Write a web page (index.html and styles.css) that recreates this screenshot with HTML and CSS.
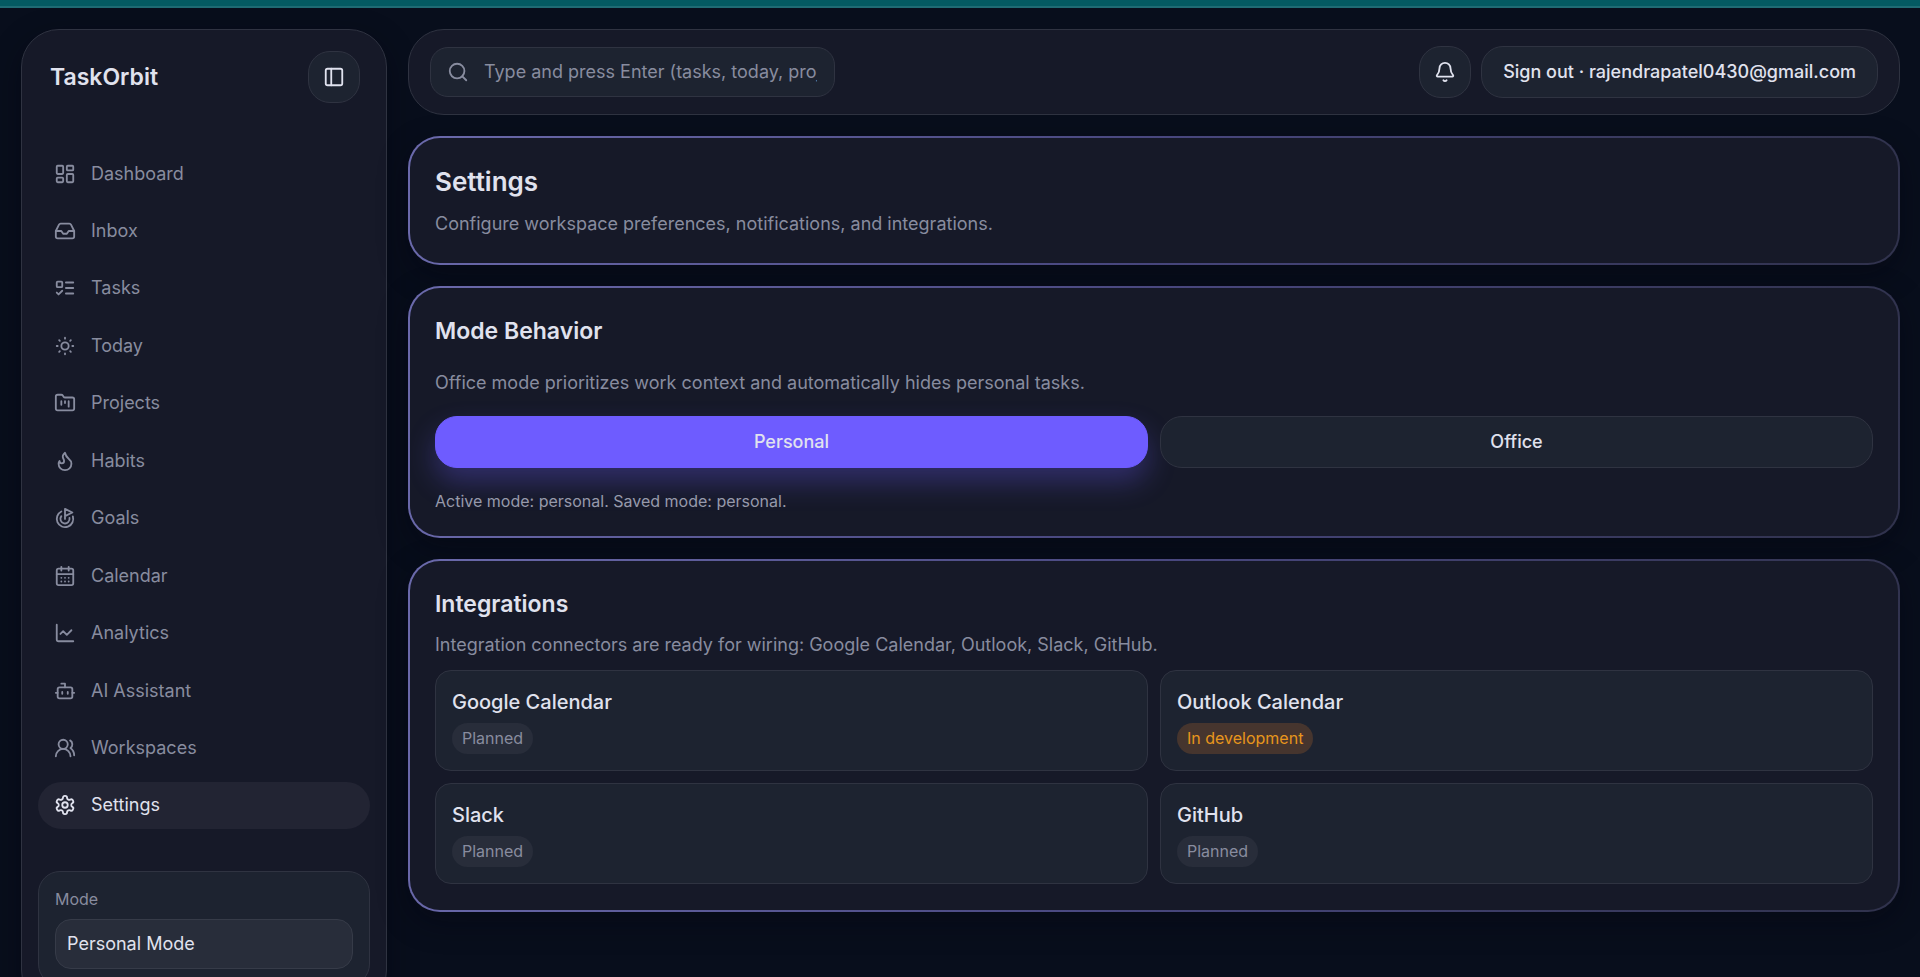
FILE: index.html
```html
<!DOCTYPE html>
<html lang="en">
<head>
  <meta charset="UTF-8" />
  <meta name="viewport" content="width=device-width, initial-scale=1.0" />
  <title>TaskOrbit - Settings</title>
  <link rel="stylesheet" href="styles.css">
</head>
<body>
  <div class="top-strip"></div>

  <div class="app">
    <!-- Sidebar -->
    <aside class="sidebar">
      <div class="brand">
        <span class="brand-name">TaskOrbit</span>
        <button class="icon-btn" type="button" aria-label="Toggle sidebar">
          <svg class="icon" viewBox="0 0 24 24"><rect x="3" y="3" width="18" height="18" rx="2"/><path d="M9 3v18"/></svg>
        </button>
      </div>

      <nav class="nav">
        <a class="nav-link" href="#dashboard">
          <svg class="icon" viewBox="0 0 24 24"><rect x="3" y="3" width="7" height="9" rx="1"/><rect x="14" y="3" width="7" height="5" rx="1"/><rect x="14" y="12" width="7" height="9" rx="1"/><rect x="3" y="16" width="7" height="5" rx="1"/></svg>
          Dashboard
        </a>
        <a class="nav-link" href="#inbox">
          <svg class="icon" viewBox="0 0 24 24"><path d="M22 12h-6l-2 3h-4l-2-3H2"/><path d="M5.45 5.11 2 12v6a2 2 0 0 0 2 2h16a2 2 0 0 0 2-2v-6l-3.45-6.89A2 2 0 0 0 16.76 4H7.24a2 2 0 0 0-1.79 1.11z"/></svg>
          Inbox
        </a>
        <a class="nav-link" href="#tasks">
          <svg class="icon" viewBox="0 0 24 24"><rect x="3" y="5" width="6" height="6" rx="1"/><path d="m3 17 2 2 4-4M13 6h8M13 12h8M13 18h8"/></svg>
          Tasks
        </a>
        <a class="nav-link" href="#today">
          <svg class="icon" viewBox="0 0 24 24"><circle cx="12" cy="12" r="4"/><path d="M12 3v1M12 20v1M3 12h1M20 12h1M18.364 5.636l-.707.707M6.343 17.657l-.707.707M5.636 5.636l.707.707M17.657 17.657l.707.707"/></svg>
          Today
        </a>
        <a class="nav-link" href="#projects">
          <svg class="icon" viewBox="0 0 24 24"><path d="M4 20h16a2 2 0 0 0 2-2V8a2 2 0 0 0-2-2h-7.93a2 2 0 0 1-1.66-.9l-.82-1.2A2 2 0 0 0 7.93 3H4a2 2 0 0 0-2 2v13a2 2 0 0 0 2 2Z"/><path d="M8 10v4M12 10v2M16 10v6"/></svg>
          Projects
        </a>
        <a class="nav-link" href="#habits">
          <svg class="icon" viewBox="0 0 24 24"><path d="M8.5 14.5A2.5 2.5 0 0 0 11 12c0-1.38-.5-2-1-3-1.072-2.143-.224-4.054 2-6 .5 2.5 2 4.9 4 6.5 2 1.6 3 3.5 3 5.5a7 7 0 1 1-14 0c0-1.153.433-2.294 1-3a2.5 2.5 0 0 0 2.5 2.5z"/></svg>
          Habits
        </a>
        <a class="nav-link" href="#goals">
          <svg class="icon" viewBox="0 0 24 24"><path d="M12 13V2l8 4-8 4"/><path d="M20.561 10.222a9 9 0 1 1-12.55-5.29"/><path d="M8.002 9.997a5 5 0 1 0 8.9 2.02"/></svg>
          Goals
        </a>
        <a class="nav-link" href="#calendar">
          <svg class="icon" viewBox="0 0 24 24"><path d="M8 2v4M16 2v4M3 10h18"/><rect x="3" y="4" width="18" height="18" rx="2"/><path d="M8 14h.01M12 14h.01M16 14h.01M8 18h.01M12 18h.01M16 18h.01"/></svg>
          Calendar
        </a>
        <a class="nav-link" href="#analytics">
          <svg class="icon" viewBox="0 0 24 24"><path d="M3 3v16a2 2 0 0 0 2 2h16"/><path d="m19 9-5 5-4-4-3 3"/></svg>
          Analytics
        </a>
        <a class="nav-link" href="#assistant">
          <svg class="icon" viewBox="0 0 24 24"><path d="M12 8V4H8"/><rect x="4" y="8" width="16" height="12" rx="2"/><path d="M2 14h2M20 14h2M15 13v2M9 13v2"/></svg>
          AI Assistant
        </a>
        <a class="nav-link" href="#workspaces">
          <svg class="icon" viewBox="0 0 24 24"><path d="M18 21a8 8 0 0 0-16 0"/><circle cx="10" cy="8" r="5"/><path d="M22 20c0-3.37-2-6.5-4-8a5 5 0 0 0-.45-8.3"/></svg>
          Workspaces
        </a>
        <a class="nav-link active" href="#settings" aria-current="page">
          <svg class="icon" viewBox="0 0 24 24"><path d="M12.22 2h-.44a2 2 0 0 0-2 2v.18a2 2 0 0 1-1 1.73l-.43.25a2 2 0 0 1-2 0l-.15-.08a2 2 0 0 0-2.73.73l-.22.38a2 2 0 0 0 .73 2.73l.15.1a2 2 0 0 1 1 1.72v.51a2 2 0 0 1-1 1.74l-.15.09a2 2 0 0 0-.73 2.73l.22.38a2 2 0 0 0 2.73.73l.15-.08a2 2 0 0 1 2 0l.43.25a2 2 0 0 1 1 1.73V20a2 2 0 0 0 2 2h.44a2 2 0 0 0 2-2v-.18a2 2 0 0 1 1-1.73l.43-.25a2 2 0 0 1 2 0l.15.08a2 2 0 0 0 2.73-.73l.22-.39a2 2 0 0 0-.73-2.73l-.15-.08a2 2 0 0 1-1-1.74v-.5a2 2 0 0 1 1-1.74l.15-.09a2 2 0 0 0 .73-2.73l-.22-.38a2 2 0 0 0-2.73-.73l-.15.08a2 2 0 0 1-2 0l-.43-.25a2 2 0 0 1-1-1.73V4a2 2 0 0 0-2-2z"/><circle cx="12" cy="12" r="3"/></svg>
          Settings
        </a>
      </nav>

      <div class="mode-box">
        <label for="modeSelect">Mode</label>
        <select id="modeSelect">
          <option selected>Personal Mode</option>
          <option>Office Mode</option>
        </select>
      </div>
    </aside>

    <main class="main">
      <!-- Top bar -->
      <header class="topbar">
        <label class="search">
          <svg class="icon" viewBox="0 0 24 24"><circle cx="11" cy="11" r="8"/><path d="m21 21-4.3-4.3"/></svg>
          <input type="text" aria-label="Search" placeholder="Type and press Enter (tasks, today, projects)" />
        </label>
        <div class="topbar-actions">
          <button class="icon-btn" type="button" aria-label="Notifications">
            <svg class="icon" viewBox="0 0 24 24"><path d="M10.268 21a2 2 0 0 0 3.464 0"/><path d="M3.262 15.326A1 1 0 0 0 4 17h16a1 1 0 0 0 .74-1.673C19.41 13.956 18 12.499 18 8A6 6 0 0 0 6 8c0 4.499-1.411 5.956-2.738 7.326"/></svg>
          </button>
          <button class="btn" type="button">Sign out · rajendrapatel0430@gmail.com</button>
        </div>
      </header>

      <section class="card">
        <h1>Settings</h1>
        <p class="text">Configure workspace preferences, notifications, and integrations.</p>
      </section>

      <section class="card mode-card">
        <h2>Mode Behavior</h2>
        <p class="text">Office mode prioritizes work context and automatically hides personal tasks.</p>
        <div class="grid">
          <button class="btn btn-primary" type="button">Personal</button>
          <button class="btn" type="button">Office</button>
        </div>
        <p class="note">Active mode: personal. Saved mode: personal.</p>
      </section>

      <section class="card">
        <h2>Integrations</h2>
        <p class="text">Integration connectors are ready for wiring: Google Calendar, Outlook, Slack, GitHub.</p>
        <div class="grid integrations">
          <article class="tile">
            <h3>Google Calendar</h3>
            <span class="badge">Planned</span>
          </article>
          <article class="tile">
            <h3>Outlook Calendar</h3>
            <span class="badge badge-warning">In development</span>
          </article>
          <article class="tile">
            <h3>Slack</h3>
            <span class="badge">Planned</span>
          </article>
          <article class="tile">
            <h3>GitHub</h3>
            <span class="badge">Planned</span>
          </article>
        </div>
      </section>
    </main>
  </div>
</body>
</html>
```
FILE: styles.css
```css
:root {
  --bg: #080e1c;
  --panel: #161928;
  --surface: #1d2330;
  --surface-2: #282d3a;
  --border: #2f3341;
  --text: #e0e2ee;
  --muted: #888c9f;
  --primary: #6e5cff;
  --font: Inter, "Noto Sans", "Liberation Sans", sans-serif;
}

* {
  box-sizing: border-box;
}

html, body {
  height: 100%;
  margin: 0;
}

body {
  overflow: hidden;
  background: var(--bg);
  color: var(--text);
  font-family: var(--font);
  font-size: 18px;
  line-height: 26px;
}

h1, h2, h3, p {
  margin: 0;
}

button, input, select {
  font: inherit;
  color: inherit;
}

.top-strip {
  height: 8px;
  background: #045a62;
  border-bottom: 2px solid #1f6b74;
}

.app {
  display: flex;
  align-items: flex-start;
  gap: 21px;
  padding: 21px 20px 21px 21px;
}

.icon {
  width: 22px;
  height: 22px;
  flex: none;
  fill: none;
  stroke: currentColor;
  stroke-width: 2;
  stroke-linecap: round;
  stroke-linejoin: round;
}

/* Sidebar */
.sidebar {
  flex: none;
  width: 366px;
  padding: 21px 16px;
  background: var(--panel);
  border: 1px solid var(--border);
  border-radius: 38px;
  box-shadow: 0 10px 30px rgba(4, 6, 14, 0.4);
}

.brand {
  display: flex;
  align-items: center;
  justify-content: space-between;
  padding: 0 10px 0 12px;
}

.brand-name {
  font-size: 23px;
  font-weight: 600;
}

.nav {
  display: flex;
  flex-direction: column;
  justify-content: space-between;
  min-height: 679px;
  margin: 47px 0 42px;
}

.nav-link {
  display: flex;
  align-items: center;
  gap: 15px;
  height: 47px;
  padding: 0 16px;
  border-radius: 24px;
  color: var(--muted);
  text-decoration: none;
}

.nav-link.active {
  background: #222433;
  color: var(--text);
}

.mode-box {
  padding: 16px;
  background: var(--surface);
  border: 1px solid var(--border);
  border-radius: 22px;
}

.mode-box label {
  display: block;
  margin-bottom: 9px;
  color: var(--muted);
  font-size: 16px;
  line-height: 22px;
}

.mode-box select {
  appearance: none;
  width: 100%;
  height: 50px;
  padding: 0 11px;
  background: var(--surface-2);
  border: 1px solid #363b48;
  border-radius: 16px;
}

/* Buttons */
.icon-btn,
.btn {
  height: 52px;
  background: var(--surface);
  border: 1px solid var(--border);
  border-radius: 22px;
  cursor: pointer;
}

.icon-btn {
  display: flex;
  align-items: center;
  justify-content: center;
  width: 52px;
  padding: 0;
}

.btn {
  padding: 0 21px;
  font-weight: 500;
}

.btn-primary {
  background: var(--primary);
  border-color: var(--primary);
  box-shadow: 0 14px 28px rgba(110, 92, 255, 0.3);
}

/* Main column */
.main {
  flex: 1;
  min-width: 0;
  display: flex;
  flex-direction: column;
  gap: 21px;
}

.topbar {
  display: flex;
  align-items: center;
  justify-content: space-between;
  padding: 16px 21px;
  background: var(--panel);
  border: 1px solid var(--border);
  border-radius: 36px;
}

.topbar-actions {
  display: flex;
  gap: 10px;
}

.search {
  display: flex;
  align-items: center;
  gap: 15px;
  width: 405px;
  height: 50px;
  padding: 0 17px 0 16px;
  background: var(--surface);
  border: 1px solid var(--border);
  border-radius: 18px;
  color: var(--muted);
}

.search input {
  flex: 1;
  min-width: 0;
  padding: 0;
  background: none;
  border: none;
  outline: none;
}

.search input::placeholder {
  color: var(--muted);
  opacity: 1;
}

/* Cards with a border that fades from left to right */
.card {
  padding: 26px 25px;
  border: 2px solid transparent;
  border-radius: 32px;
  background:
    linear-gradient(var(--panel), var(--panel)) padding-box,
    linear-gradient(100deg, #6b6aac, #48477e 50%, #30324c) border-box;
  box-shadow: 0 10px 30px rgba(4, 6, 14, 0.4);
}

h1 {
  font-size: 26px;
  font-weight: 600;
  line-height: 36px;
}

h2 {
  font-size: 23px;
  font-weight: 600;
  line-height: 34px;
}

h3 {
  font-size: 20px;
  font-weight: 500;
  line-height: 30px;
}

.text {
  margin-top: 11px;
  color: var(--muted);
}

.mode-card .text {
  margin-top: 22px;
}

.note {
  margin-top: 24px;
  color: #9699ab;
  font-size: 16px;
  line-height: 18px;
}

.grid {
  display: grid;
  grid-template-columns: 1fr 1fr;
  gap: 12px;
  margin-top: 20px;
}

.grid.integrations {
  margin-top: 12px;
}

.tile {
  padding: 16px;
  background: var(--surface);
  border: 1px solid var(--border);
  border-radius: 16px;
}

.badge {
  display: block;
  width: fit-content;
  margin-top: 6px;
  padding: 5px 10px;
  border-radius: 16px;
  background: var(--surface-2);
  color: var(--muted);
  font-size: 16px;
  line-height: 21px;
}

.badge-warning {
  background: #46352e;
  color: #e8961c;
}
```
